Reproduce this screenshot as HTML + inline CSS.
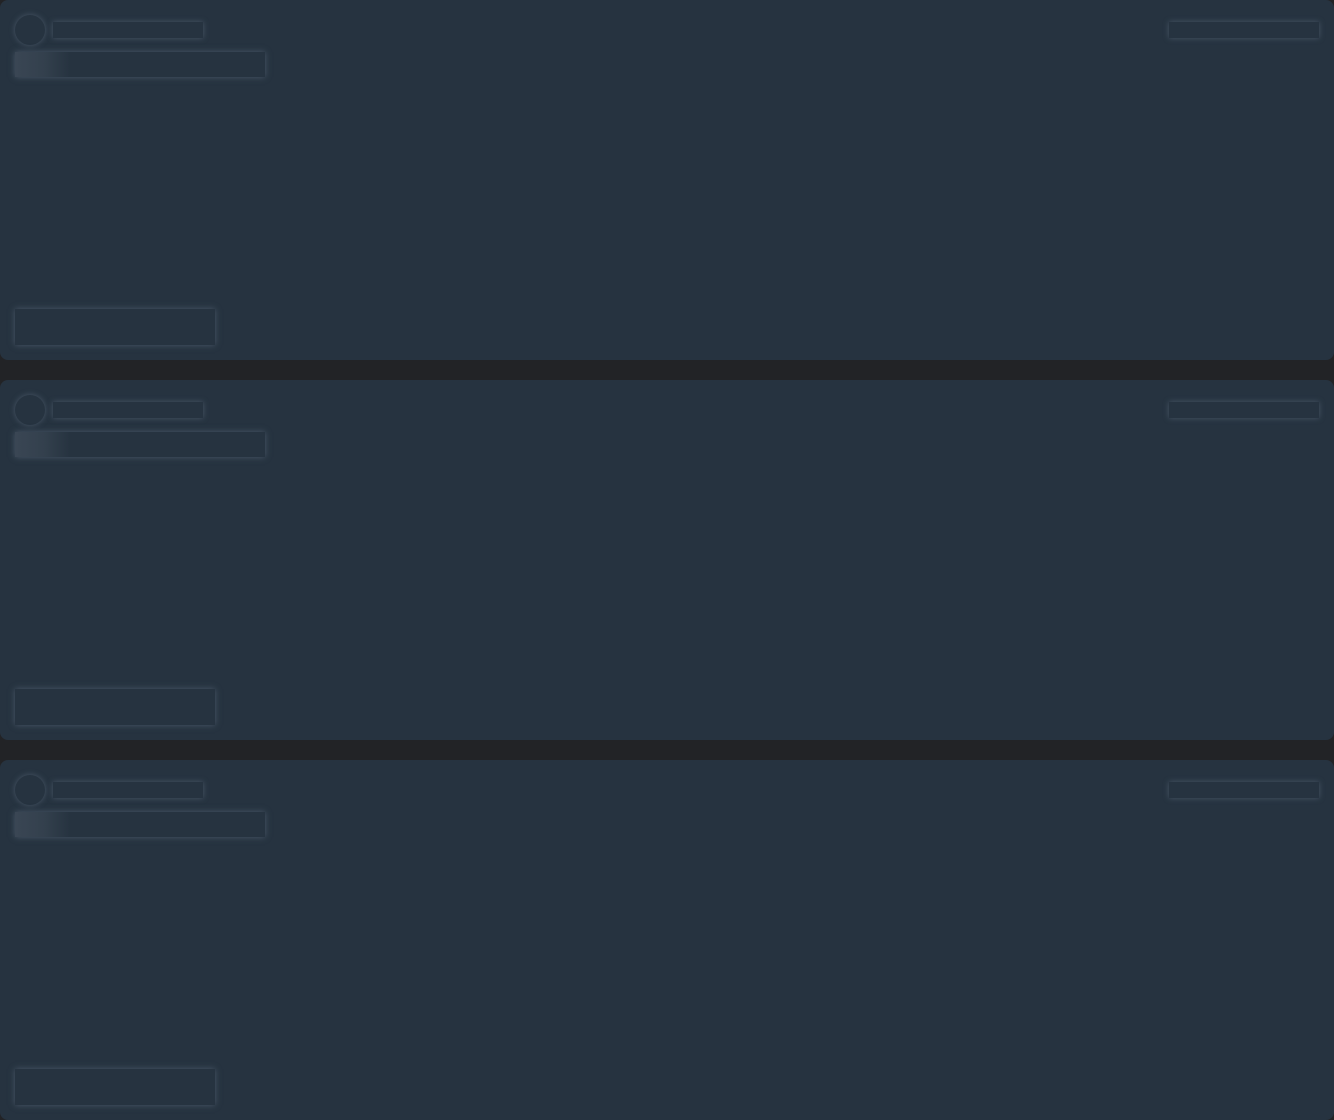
<!DOCTYPE html>
<html><head><style>
html,body{margin:0;padding:0;background:#222326;width:1334px;height:1120px;overflow:hidden}
.card{position:absolute;left:0;width:1334px;height:360px;background:#263340;border-radius:8px}
.s{position:absolute;background:#263340;box-shadow:0 0 6px 0 #4a5868}
.c{left:15px;top:15px;width:30px;height:30px;border-radius:50%}
.a{left:53px;top:22px;width:150px;height:16px}
.b{left:15px;top:52px;width:250px;height:25px;background:linear-gradient(90deg,#3a4654 0,#33404d 12%,#263340 22%)}
.r{left:1169px;top:22px;width:150px;height:16px}
.d{left:15px;top:309px;width:200px;height:36px}
</style></head><body>
<div class="card" style="top:0"><div class="s c"></div><div class="s a"></div><div class="s b"></div><div class="s r"></div><div class="s d"></div></div>
<div class="card" style="top:380px"><div class="s c"></div><div class="s a"></div><div class="s b"></div><div class="s r"></div><div class="s d"></div></div>
<div class="card" style="top:760px"><div class="s c"></div><div class="s a"></div><div class="s b"></div><div class="s r"></div><div class="s d"></div></div>
</body></html>
